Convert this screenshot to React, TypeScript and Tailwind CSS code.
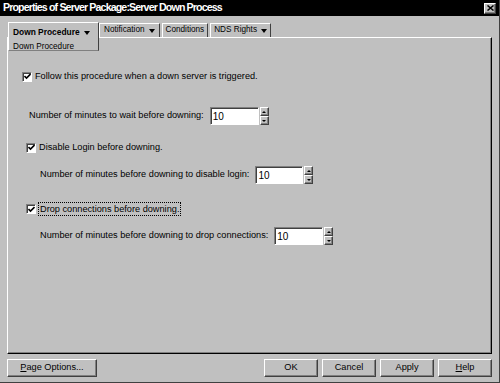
const raised =
  "border border-t-white border-l-white border-r-[#404040] border-b-[#404040] shadow-[inset_-1px_-1px_0_#808080]";
const sunken =
  "border border-t-[#808080] border-l-[#808080] border-r-white border-b-white shadow-[inset_1px_1px_0_#404040]";

function Check({ label, focus }: { label: string; focus?: boolean }) {
  return (
    <div className="flex items-center gap-[2px]">
      <div className={`w-[10px] h-[10px] bg-white flex items-center justify-center ${sunken}`}>
        <svg width="7" height="7" viewBox="0 0 7 7">
          <path d="M0.5 3 L2.5 5 L6.5 1" stroke="black" strokeWidth="1.6" fill="none" />
        </svg>
      </div>
      <span className={focus ? "border border-dotted border-black px-[1px] leading-[12px]" : "px-[1px]"}>
        {label}
      </span>
    </div>
  );
}

function Spin({ label, w }: { label: string; w: number }) {
  return (
    <div className="flex items-center gap-[6px]">
      <span>{label}</span>
      <div className="flex items-center">
        <div className={`h-[18px] bg-white flex items-center pl-[2px] text-[10px] ${sunken}`} style={{ width: w }}>
          10
        </div>
        <div className="flex flex-col ml-[1px]">
          <div className={`w-[9px] h-[9px] bg-[#c0c0c0] flex items-center justify-center ${raised}`}>
            <div className="w-0 h-0 border-l-[2px] border-r-[2px] border-b-[2px] border-l-transparent border-r-transparent border-b-black" />
          </div>
          <div className={`w-[9px] h-[9px] bg-[#c0c0c0] flex items-center justify-center ${raised}`}>
            <div className="w-0 h-0 border-l-[2px] border-r-[2px] border-t-[2px] border-l-transparent border-r-transparent border-t-black" />
          </div>
        </div>
      </div>
    </div>
  );
}

function Btn({ children, w }: { children: React.ReactNode; w: string }) {
  return (
    <div className={`${w} h-[18px] bg-[#c0c0c0] flex items-center justify-center ${raised}`}>{children}</div>
  );
}

function Arrow() {
  return (
    <span className="inline-block ml-[4px] w-0 h-0 border-l-[3px] border-r-[3px] border-t-[4px] border-l-transparent border-r-transparent border-t-black align-middle" />
  );
}

const tab =
  "flex items-center h-[14px] mt-[1px] whitespace-nowrap border border-t-white border-l-white border-r-[#404040] border-b-0";

export default function App() {
  return (
    <div
      className="w-[500px] h-[383px] bg-[#c0c0c0] flex flex-col border-r border-b border-[#404040] text-black text-[9.2px] overflow-hidden"
      style={{ fontFamily: '"Liberation Sans", Arial, sans-serif' }}
    >
      <div className="h-[16px] bg-black flex items-center justify-between pl-[3px] pr-[3px] shrink-0">
        <span className="text-white font-bold text-[10.6px] tracking-[-0.85px]">
          Properties of Server Package:Server Down Process
        </span>
        <div className={`w-[12px] h-[11px] bg-[#c0c0c0] flex items-center justify-center ${raised}`}>
          <svg width="7" height="6" viewBox="0 0 7 6">
            <path d="M0.5 0.5 L6.5 5.5 M6.5 0.5 L0.5 5.5" stroke="black" strokeWidth="1.5" />
          </svg>
        </div>
      </div>

      <div className="flex items-start pl-[8px] mt-[6px] h-[15px] shrink-0 relative z-10 text-[8.2px]">
        <div className="w-[91px] h-[29px] shrink-0 bg-[#c0c0c0] border border-t-white border-l-white border-r-[#404040] border-b-[#808080] flex flex-col pl-[4px] pt-[3px] whitespace-nowrap">
          <span className="font-bold text-[8.4px]">
            Down Procedure
            <Arrow />
          </span>
          <span className="mt-[2px]">Down Procedure</span>
        </div>
        <div className={`${tab} px-[4px]`}>
          Notification
          <Arrow />
        </div>
        <div className={`${tab} ml-[2px] px-[3px]`}>Conditions</div>
        <div className={`${tab} ml-[2px] px-[3px]`}>
          NDS Rights
          <Arrow />
        </div>
      </div>

      <div className="flex-1 mx-[7px] border border-t-white border-l-white border-r-black border-b-black shadow-[inset_-1px_-1px_0_#808080] flex flex-col">
        <div className="ml-[14px] mt-[30px] h-[18px] flex items-center">
          <Check label="Follow this procedure when a down server is triggered." />
        </div>
        <div className="ml-[21px] mt-[21px] h-[18px] flex items-center">
          <Spin label="Number of minutes to wait before downing:" w={49} />
        </div>
        <div className="ml-[18px] mt-[14px] h-[18px] flex items-center">
          <Check label="Disable Login before downing." />
        </div>
        <div className="ml-[32px] mt-[9px] h-[18px] flex items-center">
          <Spin label="Number of minutes before downing to disable login:" w={48} />
        </div>
        <div className="ml-[18px] mt-[16px] h-[18px] flex items-center">
          <Check label="Drop connections before downing." focus />
        </div>
        <div className="ml-[32px] mt-[9px] h-[18px] flex items-center">
          <Spin label="Number of minutes before downing to drop connections:" w={49} />
        </div>
      </div>

      <div className="h-[28px] flex items-center px-[7px] shrink-0">
        <Btn w="w-[90px]">
          <span>
            <span className="underline">P</span>age Options...
          </span>
        </Btn>
        <div className="flex-1" />
        <div className="flex gap-[4px]">
          <Btn w="w-[54px]">OK</Btn>
          <Btn w="w-[54px]">Cancel</Btn>
          <Btn w="w-[54px]">Apply</Btn>
          <Btn w="w-[54px]">
            <span>
              <span className="underline">H</span>elp
            </span>
          </Btn>
        </div>
      </div>
    </div>
  );
}
